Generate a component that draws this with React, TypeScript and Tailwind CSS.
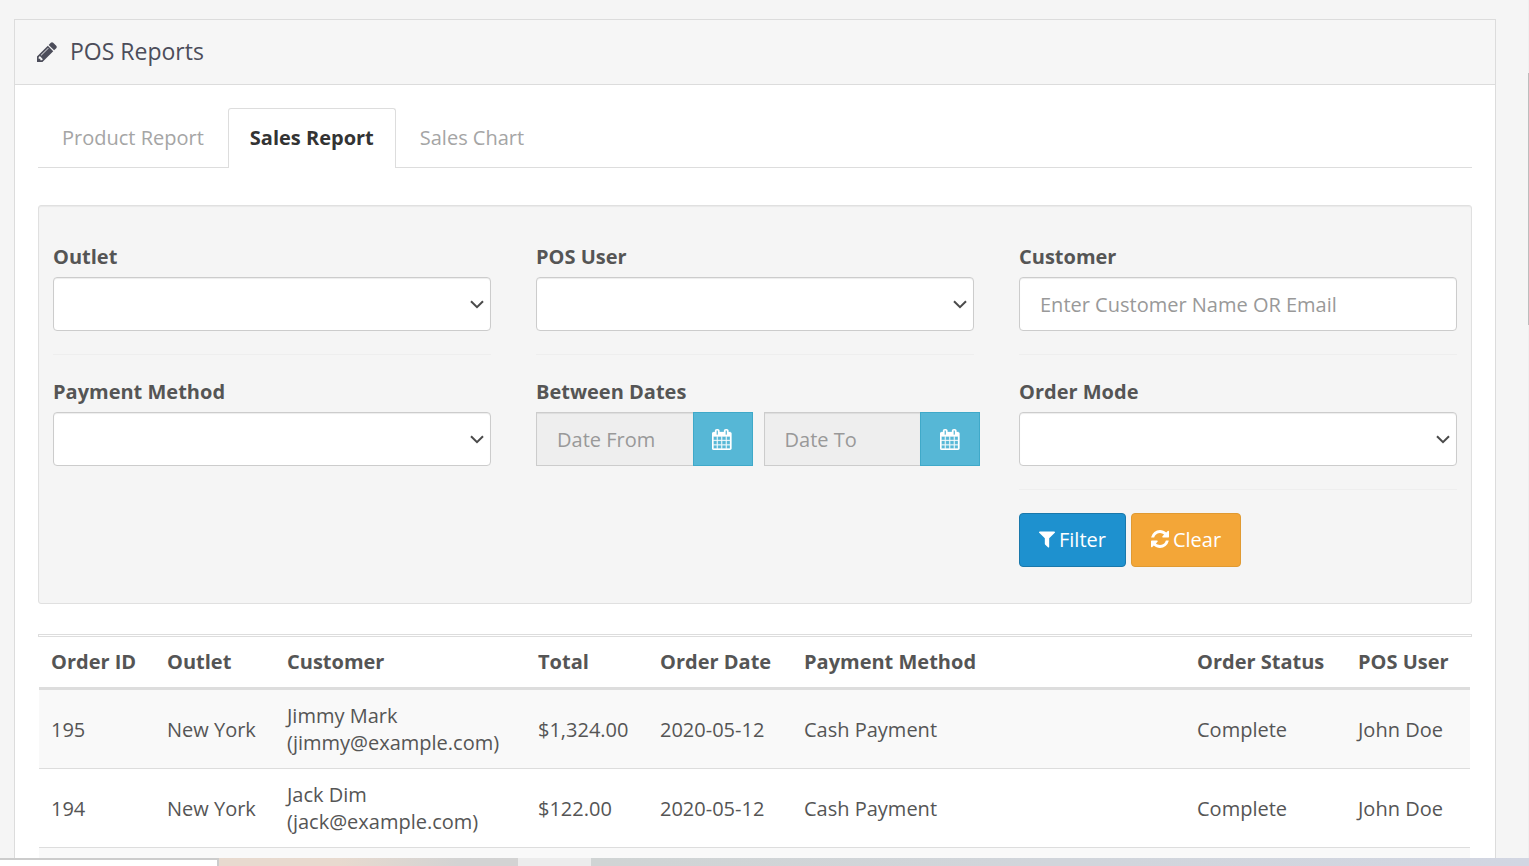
import type { ReactNode } from 'react';

const controlShadow = 'shadow-[inset_0_1px_1px_rgba(0,0,0,0.075)]';

function PencilIcon() {
  return (
    <svg viewBox="128 128 1536 1536" className="size-5 fill-current" aria-hidden="true">
      <path d="M491 1536l91-91-235-235-91 91v107h128v128h107zm523-928q0-22-22-22-10 0-17 7l-542 542q-7 7-7 17 0 22 22 22 10 0 17-7l542-542q7-7 7-17zm-54-192l416 416-832 832h-416v-416zm683 96q0 53-37 90l-166 166-416-416 166-165q36-38 90-38 53 0 91 38l235 234q37 39 37 91z" />
    </svg>
  );
}

function CalendarIcon() {
  return (
    <svg viewBox="0 0 1792 1792" className="size-[21px] fill-current stroke-current" strokeWidth="24" aria-hidden="true">
      <path
        transform="translate(-64 0)"
        d="M192 1664h288v-288h-288v288zm352 0h320v-288h-320v288zm-352-352h288v-320h-288v320zm352 0h320v-320h-320v320zm-352-384h288v-288h-288v288zm736 736h320v-288h-320v288zm-384-736h320v-288h-320v288zm768 736h288v-288h-288v288zm-384-352h320v-320h-320v320zm-352-864v-288q0-13-9.5-22.5t-22.5-9.5h-64q-13 0-22.5 9.5t-9.5 22.5v288q0 13 9.5 22.5t22.5 9.5h64q13 0 22.5-9.5t9.5-22.5zm736 864h288v-320h-288v320zm-384-384h320v-288h-320v288zm384 0h288v-288h-288v288zm32-480v-288q0-13-9.5-22.5t-22.5-9.5h-64q-13 0-22.5 9.5t-9.5 22.5v288q0 13 9.5 22.5t22.5 9.5h64q13 0 22.5-9.5t9.5-22.5zm384-64v1280q0 52-38 90t-90 38h-1408q-52 0-90-38t-38-90v-1280q0-52 38-90t90-38h128v-96q0-66 47-113t113-47h64q66 0 113 47t47 113v96h384v-96q0-66 47-113t113-47h64q66 0 113 47t47 113v96h128q52 0 90 38t38 90z"
      />
    </svg>
  );
}

function FilterIcon() {
  return (
    <svg viewBox="192 128 1408 1664" className="h-[19px] w-4 fill-current" aria-hidden="true">
      <path d="M1595 295q17 41-14 70l-493 493v742q0 42-39 59-13 5-25 5-27 0-45-19l-256-256q-19-19-19-45v-486l-493-493q-31-29-14-70 17-39 59-39h1280q42 0 59 39z" />
    </svg>
  );
}

function RefreshIcon() {
  return (
    <svg viewBox="128 128 1536 1536" className="size-[18px] fill-current" aria-hidden="true">
      <path d="M1639 1056q0 5-1 7-64 268-268 434.5t-478 166.5q-146 0-282.5-55t-243.5-157l-129 129q-19 19-45 19t-45-19-19-45v-448q0-26 19-45t45-19h448q26 0 45 19t19 45-19 45l-137 137q71 66 161 102t187 36q134 0 250-65t186-179q11-17 53-117 8-23 30-23h192q13 0 22.5 9.5t9.5 22.5zm25-800v448q0 26-19 45t-45 19h-448q-26 0-45-19t-19-45 19-45l138-138q-148-137-349-137-134 0-250 65t-186 179q-11 17-53 117-8 23-30 23h-199q-13 0-22.5-9.5t-9.5-22.5v-7q65-268 270-434.5t480-166.5q146 0 284 55.5t245 156.5l130-129q19-19 45-19t45 19 19 45z" />
    </svg>
  );
}

function Field({ id, label, children }: { id: string; label: string; children: ReactNode }) {
  return (
    <div className="flex flex-col items-stretch gap-[7px]">
      <label htmlFor={id} className="self-start font-bold">
        {label}
      </label>
      {children}
    </div>
  );
}

function SelectBox({ id }: { id: string }) {
  return (
    <div className="grid items-center">
      <select
        id={id}
        defaultValue=""
        className={`col-start-1 row-start-1 h-[54px] w-full appearance-none rounded border border-[#ccc] bg-white px-5 ${controlShadow}`}
      >
        <option value="" />
      </select>
      <svg
        viewBox="0 0 14 9"
        className="pointer-events-none col-start-1 row-start-1 mr-[7px] h-[9px] w-[14px] justify-self-end fill-none stroke-[#4a4a4a]"
        strokeWidth="2"
        aria-hidden="true"
      >
        <path d="M1 1.2L7 7.2L13 1.2" />
      </svg>
    </div>
  );
}

function DateBox({ id, placeholder }: { id: string; placeholder: string }) {
  return (
    <div className="flex min-w-0 flex-1">
      <input
        id={id}
        readOnly
        aria-label={placeholder}
        placeholder={placeholder}
        className={`h-[54px] w-0 min-w-0 flex-1 border border-r-0 border-[#ccc] bg-[#eee] px-5 placeholder:text-[#999] ${controlShadow}`}
      />
      <button
        type="button"
        aria-label={`Pick ${placeholder}`}
        className="flex h-[54px] w-[60px] items-center justify-center border border-[#3fa9c9] bg-[#56b7d6] text-white"
      >
        <CalendarIcon />
      </button>
    </div>
  );
}

function Divider() {
  return <hr className="my-[23px] border-t border-[#eee]" />;
}

const columns = [
  { title: 'Order ID', width: 'w-[116px]' },
  { title: 'Outlet', width: 'w-[120px]' },
  { title: 'Customer', width: 'w-[251px]' },
  { title: 'Total', width: 'w-[122px]' },
  { title: 'Order Date', width: 'w-[144px]' },
  { title: 'Payment Method', width: 'w-auto' },
  { title: 'Order Status', width: 'w-[161px]' },
  { title: 'POS User', width: 'w-[124px]' },
];

const orders = [
  { id: '195', outlet: 'New York', name: 'Jimmy Mark', email: 'jimmy@example.com', total: '$1,324.00', date: '2020-05-12', method: 'Cash Payment', status: 'Complete', user: 'John Doe' },
  { id: '194', outlet: 'New York', name: 'Jack Dim', email: 'jack@example.com', total: '$122.00', date: '2020-05-12', method: 'Cash Payment', status: 'Complete', user: 'John Doe' },
];

function OrdersTable() {
  return (
    <div className="mt-[30px]">
      <div className="h-[3px] border border-[#ddd]" />
      <div className="pr-[2px] pl-px">
        <table className="w-full table-fixed border-separate border-spacing-0 text-left">
          <thead>
            <tr>
              {columns.map((c) => (
                <th
                  key={c.title}
                  scope="col"
                  className={`${c.width} border-b-3 border-[#ddd] px-3 pt-[11px] pb-3 font-bold whitespace-nowrap`}
                >
                  {c.title}
                </th>
              ))}
            </tr>
          </thead>
          <tbody>
            {orders.map((o) => (
              <tr
                key={o.id}
                className="odd:bg-[#f9f9f9] [&>td]:border-b [&>td]:border-[#ddd] [&>td]:px-3 [&>td]:pt-3 [&>td]:pb-3"
              >
                <td>{o.id}</td>
                <td>{o.outlet}</td>
                <td>
                  {o.name}
                  <br />({o.email})
                </td>
                <td>{o.total}</td>
                <td>{o.date}</td>
                <td>{o.method}</td>
                <td>{o.status}</td>
                <td>{o.user}</td>
              </tr>
            ))}
            <tr className="h-20 bg-[#f9f9f9]">
              <td colSpan={columns.length} />
            </tr>
          </tbody>
        </table>
      </div>
    </div>
  );
}

export default function App() {
  return (
    <div className="flex h-screen flex-col overflow-hidden bg-[#f5f5f5] font-['Open_Sans',sans-serif] text-[20px] leading-[27px] text-[#555]">
      <div className="flex min-h-0 flex-1">
        <main className="min-w-0 flex-1 overflow-hidden pt-[19px] pr-8 pl-[14px]">
          <section className="border border-[#dcdcdc] bg-white">
            <header className="flex h-[65px] items-center gap-[13px] border-b border-[#dcdcdc] bg-[#f6f6f6] px-[22px] text-[#4c4d5a]">
              <PencilIcon />
              <h1 className="pb-0.5 text-[23px]">POS Reports</h1>
            </header>

            <div className="px-[23px] pt-[23px]">
              <nav className="flex gap-[2px] border-b border-[#ddd] pl-[2px]">
                <a href="#product" className="-mb-px border border-transparent px-[21px] pt-[15px] pb-4 text-[#a5a5a5]">
                  Product Report
                </a>
                <a
                  href="#sales"
                  aria-current="page"
                  className="-mb-px rounded-t-[3px] border border-b-0 border-[#ddd] bg-white px-[21px] pt-[15px] pb-4 font-bold text-[#333]"
                >
                  Sales Report
                </a>
                <a href="#chart" className="-mb-px border border-transparent px-[21px] pt-[15px] pb-4 text-[#a5a5a5]">
                  Sales Chart
                </a>
              </nav>

              <form className="mt-[37px] grid grid-cols-3 gap-x-[45px] rounded-[3px] border border-[#e0e0e0] bg-[#f5f5f5] px-[14px] pt-[37px] pb-9 shadow-[inset_0_1px_1px_rgba(0,0,0,0.05)]">
                <div>
                  <Field id="outlet" label="Outlet">
                    <SelectBox id="outlet" />
                  </Field>
                  <Divider />
                  <Field id="payment" label="Payment Method">
                    <SelectBox id="payment" />
                  </Field>
                </div>
                <div>
                  <Field id="pos-user" label="POS User">
                    <SelectBox id="pos-user" />
                  </Field>
                  <Divider />
                  <Field id="date-from" label="Between Dates">
                    <div className="-mr-[6px] flex gap-[11px]">
                      <DateBox id="date-from" placeholder="Date From" />
                      <DateBox id="date-to" placeholder="Date To" />
                    </div>
                  </Field>
                </div>
                <div>
                  <Field id="customer" label="Customer">
                    <input
                      id="customer"
                      placeholder="Enter Customer Name OR Email"
                      className={`h-[54px] w-full rounded border border-[#ccc] bg-white px-5 placeholder:text-[#999] ${controlShadow}`}
                    />
                  </Field>
                  <Divider />
                  <Field id="mode" label="Order Mode">
                    <SelectBox id="mode" />
                  </Field>
                  <Divider />
                  <div className="flex gap-[5px] text-white">
                    <button
                      type="button"
                      className="flex h-[54px] items-center gap-1 rounded border border-[#1978ab] bg-[#1e91cf] px-[19px] pb-0.5"
                    >
                      <FilterIcon />
                      Filter
                    </button>
                    <button
                      type="button"
                      className="flex h-[54px] items-center gap-1 rounded border border-[#e09a32] bg-[#f3a638] px-[19px] pb-0.5"
                    >
                      <RefreshIcon />
                      Clear
                    </button>
                  </div>
                </div>
              </form>

              <OrdersTable />
            </div>
          </section>
        </main>
        <div className="w-px bg-[#f0f0f0] pt-[73px]">
          <div className="h-[252px] bg-[#bdbdbd]" />
        </div>
      </div>
      <div className="flex h-2 shrink-0">
        <div className="w-[219px] border-t-2 border-r-2 border-[#ccc] bg-white" />
        <div className="w-[299px] bg-linear-to-r from-[#e8dacf] from-40% to-[#d3d3d3] to-80%" />
        <div className="w-[73px] bg-[#ececec]" />
        <div className="flex-1 bg-linear-to-r from-[#d0d4d4] to-[#d2d6e2]" />
      </div>
    </div>
  );
}
